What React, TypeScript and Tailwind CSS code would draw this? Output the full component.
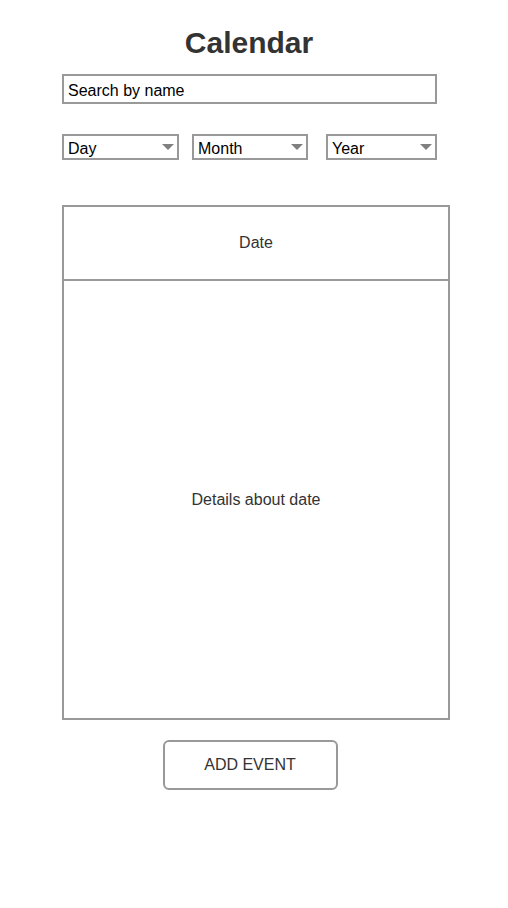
import { ChangeEvent, useState } from 'react';

const Select = ({ label, width, gapLeft }: { label: string; width: string; gapLeft: string }) => (
  <div
    className={`${width} ${gapLeft} h-[26px] border-2 border-[#999] flex items-center justify-between pl-[4px] pr-[3px] pt-[3px] text-[16px] text-black`}
  >
    <span className="leading-none">{label}</span>
    <svg width="12" height="6" viewBox="0 0 12 6" className="-mt-[3px]">
      <path d="M0 0h12L6 6z" fill="#808080" />
    </svg>
  </div>
);

export default function App() {
  const [query, setQuery] = useState('');

  return (
    <div className="w-[508px] h-[908px] bg-white font-['Liberation_Sans',Arial,sans-serif] text-[#333]">
      <h1 className="text-center text-[30px] font-bold leading-none pt-[28px] w-[498px]">Calendar</h1>

      <div className="pl-[62px] mt-[16px]">
        <input
          value={query}
          onChange={(e: ChangeEvent<HTMLInputElement>) => setQuery(e.target.value)}
          placeholder="Search by name"
          className="block w-[375px] h-[30px] border-2 border-[#999] pl-[4px] pt-[4px] text-[16px] text-black placeholder:text-black outline-none"
        />

        <div className="flex mt-[30px]">
          <Select label="Day" width="w-[117px]" gapLeft="" />
          <Select label="Month" width="w-[116px]" gapLeft="ml-[13px]" />
          <Select label="Year" width="w-[111px]" gapLeft="ml-[18px]" />
        </div>

        {/* date card */}
        <div className="mt-[45px] w-[388px] h-[515px] border-2 border-[#999] flex flex-col">
          <div className="h-[74px] border-b-2 border-[#999] flex items-center justify-center text-[16px]">Date</div>
          <div className="flex-1 flex items-center justify-center text-[16px]">Details about date</div>
        </div>
      </div>

      <div className="w-[500px] flex justify-center mt-[20px]">
        <button className="w-[175px] h-[50px] border-2 border-[#999] rounded-[6px] text-[16px] text-[#333]">
          ADD EVENT
        </button>
      </div>
    </div>
  );
}
